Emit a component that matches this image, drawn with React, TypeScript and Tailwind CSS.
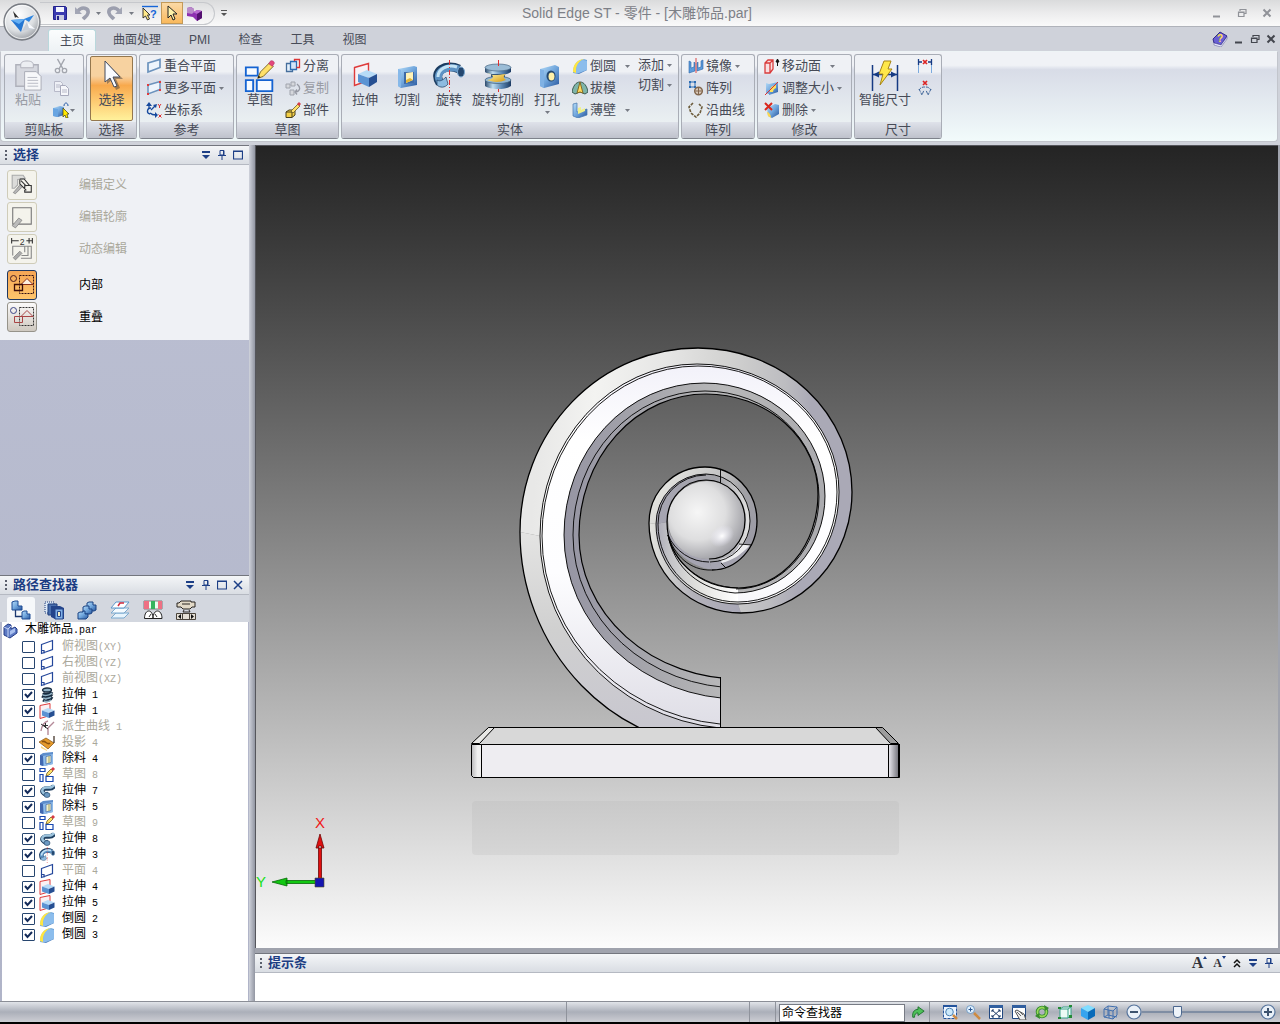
import { useState } from 'react'
import type { ReactNode } from 'react'
import { clsx } from 'clsx'

const FONT = "font-['Liberation_Sans','Noto_Sans_CJK_SC',sans-serif]"

/* ---------- icons ---------- */

interface SvgProps {
  size?: number
  box?: number
  children: ReactNode
}

function Svg({ size = 16, box = 16, children }: SvgProps) {
  return (
    <svg width={size} height={size} viewBox={`0 0 ${box} ${box}`} fill="none" className="shrink-0" aria-hidden="true">
      {children}
    </svg>
  )
}

// shared gradients, referenced by id from every icon
function Defs() {
  return (
    <svg className="absolute h-0 w-0" aria-hidden="true">
      <defs>
        <linearGradient id="blue" x1="0" y1="0" x2="1" y2="1">
          <stop offset="0" stopColor="#b5dcf8" />
          <stop offset="0.5" stopColor="#6fa5dc" />
          <stop offset="1" stopColor="#27559c" />
        </linearGradient>
        <linearGradient id="tube" x1="0" y1="0" x2="1" y2="0">
          <stop offset="0" stopColor="#2c4a6c" />
          <stop offset="0.3" stopColor="#bcdcf0" />
          <stop offset="0.65" stopColor="#5a87b4" />
          <stop offset="1" stopColor="#1c3a63" />
        </linearGradient>
        <linearGradient id="gold" x1="0" y1="0" x2="1" y2="1">
          <stop offset="0" stopColor="#fff9ae" />
          <stop offset="1" stopColor="#d99b12" />
        </linearGradient>
        <radialGradient id="orb" cx="0.4" cy="0.3" r="0.75">
          <stop offset="0" stopColor="#ffffff" />
          <stop offset="0.6" stopColor="#dcdfe2" />
          <stop offset="1" stopColor="#94989e" />
        </radialGradient>
      </defs>
    </svg>
  )
}

const icons = {
  save: (
    <>
      <path d="M1.5 1.5h12l1 1v12h-13z" fill="#3a3ab0" stroke="#22228c" />
      <path d="M4 2h8v5H4z" fill="#f4f6ff" />
      <path d="M4 10h8v5H4z" fill="#c9cbe0" />
      <path d="M5 11h2v4H5z" fill="#22228c" />
    </>
  ),
  undo: (
    <>
      <path d="M4 6c4-5 11-3 10 2-.6 3-3 4-5 6" stroke="#9c9fae" strokeWidth="3.6" />
      <path d="M1 2v7h7z" fill="#a3a6b5" />
    </>
  ),
  redo: (
    <>
      <path d="M12 6C8 1 1 3 2 8c.6 3 3 4 5 6" stroke="#9c9fae" strokeWidth="3.6" />
      <path d="M15 2v7H8z" fill="#a3a6b5" />
    </>
  ),
  help: (
    <>
      <path d="M0 1.5h16" stroke="#1565d8" strokeWidth="1.4" />
      <path d="M1 3v10l2.500-2 2 4 2-1-2-4H8z" fill="#ffe98a" stroke="#222" strokeWidth="0.9" />
      <text x="8" y="13" fill="#1565d8" className="font-['Liberation_Sans',sans-serif] text-[11px] font-bold">
        ?
      </text>
    </>
  ),
  cursor: <path d="M4 1v12l3-3 2 5 2-1-2-5h4z" fill="#fff3a8" stroke="#222" />,
  part: (
    <>
      <path d="M1 3l4-1 3 2v3l3-2 5 1v7l-5 3-4-4-6-1z" fill="#8d2fb0" />
      <path d="M1 3l4-1 3 2v3l-2 2-5-1z" fill="#b98bc9" />
      <path d="M7 7l4-2 5 1-5 3z" fill="#b86ad0" />
      <path d="M11 9l5-3v7l-5 3z" fill="#541070" />
    </>
  ),
  paste: (
    <>
      <path d="M4 5h23v22H4z" fill="#d6d8df" stroke="#afb1bb" strokeWidth="1.5" />
      <path d="M9 5c0-3 3-4 6.500-4S22 2 22 5v3H9z" fill="#eceef2" stroke="#afb1bb" />
      <path d="M13 12h12l5 5v14H13z" fill="#f7f8fa" stroke="#a9abb6" />
      <path d="M16 18h10M16 21h11M16 24h11M16 27h11" stroke="#b9bbc5" />
    </>
  ),
  cut: (
    <>
      <path d="M4.500 1L10 11M11.500 1L6 11" stroke="#a3a6ae" strokeWidth="1.5" />
      <circle cx="4.500" cy="12.500" r="2.200" stroke="#a3a6ae" strokeWidth="1.300" />
      <circle cx="11.500" cy="12.500" r="2.200" stroke="#a3a6ae" strokeWidth="1.300" />
    </>
  ),
  copy: (
    <>
      <path d="M1.500 1.500h6l2 2v8h-8z" fill="#eef0f6" stroke="#b7b9c8" />
      <path d="M7.500 5.500h5l3 3v7h-8z" fill="#f6f7fb" stroke="#a8aabc" />
      <path d="M9 10h5M9 12h5M3 5h4M3 7h4" stroke="#b7b9c8" />
    </>
  ),
  export: (
    <>
      <path d="M0 6l7-2 4 1v8l-6 2-5-1z" fill="url(#blue)" />
      <path d="M0 6l5 1v8l-5-1z" fill="#68a5e2" />
      <path d="M11 4c0-4 4-4 4 0" stroke="#2457a4" />
      <path d="M10 6v9l2-2 1 3h2l-1-4h2z" fill="#ffe800" stroke="#443c10" strokeWidth="0.700" />
    </>
  ),
  arrow: (
    <>
      <path d="M11 3v21l5-4 4 10 4-2-4-9h7z" fill="#4a4038" opacity="0.500" />
      <path d="M9 1v21l5-4 4 9 3-1-4-9h7z" fill="#f9fbff" stroke="#454d5e" />
    </>
  ),
  plane: <path d="M2 5l12-3.500v8L2 14z" fill="#eef5fc" stroke="#6c93bd" strokeWidth="1.700" />,
  planeRed: (
    <>
      <path d="M2 5l12-3.500v8L2 14z" fill="#edf4fc" stroke="#6c93bd" strokeWidth="1.500" />
      <path d="M1 4h2v2H1zM13 1h2v2h-2zM1 13h2v2H1zM13 9h2v2h-2z" fill="#e23b3b" />
    </>
  ),
  axes: (
    <>
      <path d="M3 2v4M4 11c2 2 4 2 6 2M5 8l4-4" stroke="#174a9e" strokeWidth="1.300" />
      <path d="M0 4l3-4 3 4zM9 10l3 3-3 3zM7 3l4-1-1 4z" fill="#174a9e" />
      <path d="M5 6C1 6 0 11 4 12" stroke="#174a9e" strokeWidth="1.300" />
      <path d="M12 2l1.500 2L15 2M13.500 4v2M12.500 12.500l3 3M15.500 12.500l-3 3" stroke="#d33" />
    </>
  ),
  sketch: (
    <>
      <path d="M2 8h13v9H2zM2 22h8v12H2zM14 22h17v12H14z" fill="#f7fbff" stroke="#1463d2" strokeWidth="2" />
      <path d="M15 20l3-7L28 3l4 4-11 11z" fill="#ffe068" stroke="#75601c" />
      <path d="M27 4l2-3c2-1 5 1 4 3l-2 3z" fill="#e2487e" stroke="#a02a56" strokeWidth="0.500" />
      <path d="M15 20l1-3 2 2z" fill="#111" />
    </>
  ),
  sketchSm: (
    <>
      <path d="M1 1.500h5v3H1zM1 7.500h3v7H1zM7 9.500h7v5H7z" fill="#fff" stroke="#1747b0" strokeWidth="1.200" />
      <path d="M7 9l1-3 4-4 2 2-4 4z" fill="#ffe068" stroke="#5d4d18" strokeWidth="0.700" />
      <path d="M12 2l2-2 2 2-2 2z" fill="#d83a45" />
    </>
  ),
  split: (
    <>
      <path d="M1.500 5.500h6v8h-6z" fill="#e5f0fb" stroke="#456e9c" strokeWidth="1.300" />
      <path d="M5.500 3.500h6v8h-6z" fill="#d3e5f8" stroke="#2a6cb4" strokeWidth="1.300" />
      <path d="M9.500 3V1.500h5v8h-3" stroke="#db3535" strokeWidth="1.300" />
    </>
  ),
  duplicate: (
    <>
      <path d="M1 4h4v4H1zM6 2h4v4H6zM5 10h4v5H5z" fill="#d5d7dc" stroke="#a0a4ad" />
      <path d="M12 4c5 4 2 8-2 8M12 9.500l-2 2.500 2 2.500" stroke="#9699a3" strokeWidth="1.300" />
    </>
  ),
  component: (
    <>
      <path d="M1 10l3-2h6v5l-3 2.500H1z" fill="#f3cf45" stroke="#494020" />
      <path d="M1 10h6v5M7 10l3-2" stroke="#494020" />
      <path d="M6 9l7-7 2 2-7 7z" fill="#ffe068" stroke="#6b5b25" strokeWidth="0.800" />
      <path d="M12 2l2-2 2 2-2 2z" fill="#d83a45" />
    </>
  ),
  extrude: (
    <>
      <path d="M5.500 7.500l14-4v17l-14 5z" fill="#f8f1f5" stroke="#de3b3b" strokeWidth="1.400" />
      <path d="M9 14l9-4 10 4-8 4z" fill="#b7dbf7" />
      <path d="M9 14l11 4v9L9 22z" fill="#5b93d3" />
      <path d="M20 18l8-4v8l-8 5z" fill="#264f92" />
    </>
  ),
  extrudeSm: (
    <>
      <path d="M1 2.500l10-2v12l-10 3z" fill="#fbf1f3" stroke="#de3b3b" />
      <path d="M3 7.500L9 5l6.500 2.500L10 10z" fill="#b7dbf7" />
      <path d="M3 7.500L10 10v5l-7-2.500z" fill="#5b93d3" />
      <path d="M10 10l5.500-2.500v5L10 15z" fill="#264f92" />
    </>
  ),
  cutout: (
    <>
      <path d="M7 9l16-3 3 1v18L10 28l-3-2z" fill="url(#blue)" />
      <path d="M7 9l3 1v18l-3-2z" fill="#86b8e9" />
      <path d="M13 12h10v11l-10 1z" fill="#3e6aa6" />
      <path d="M15 13l7-1v8l-7 3z" fill="#fff3b8" />
      <path d="M15 20l4-2 3 2-7 3z" fill="#e1b43a" />
    </>
  ),
  cutoutSm: (
    <>
      <path d="M1 4l3-2 10-1v12l-9 2-4-1z" fill="#5d8dcb" />
      <path d="M1 4l3 1v10l-3-1z" fill="#4168b0" />
      <path d="M4 5l10-2v10L5 15z" fill="#8fbcea" />
      <path d="M7 5.500l5-1v7l-5 1.500z" fill="#f1f0cc" stroke="#2e569b" strokeWidth="0.600" />
      <path d="M10 5v7" stroke="#a5a15d" />
    </>
  ),
  revolve: (
    <>
      <path d="M7 23C-1 11 13 3 26 9" stroke="#1c3c60" strokeWidth="9" />
      <path d="M7 22C1 12 13 5 26 9" stroke="#5d92c4" strokeWidth="7" />
      <path d="M5 17C5 9 14 4 24 7" stroke="#c4e3f5" strokeWidth="3" />
      <ellipse cx="28" cy="12" rx="3.500" ry="5" fill="#24476f" stroke="#7aa8d0" />
      <path d="M4 20c3 2 6 0 9-3l2 7c-3 4-8 4-11 1z" fill="#8dbbe0" stroke="#1c3c60" strokeWidth="0.700" />
      <path d="M16.500 0v32" stroke="#df3131" strokeDasharray="5 2 1 2" />
    </>
  ),
  revcut: (
    <>
      <path d="M3 7v5c5 4 21 4 26 0V7z" fill="url(#tube)" />
      <ellipse cx="16" cy="7.500" rx="13" ry="3.500" fill="#9bbcd6" stroke="#4a6984" strokeWidth="0.700" />
      <path d="M9 14h14v7H9z" fill="#3a5878" />
      <path d="M3 20v6c5 4 21 4 26 0v-6z" fill="url(#tube)" />
      <ellipse cx="16" cy="20" rx="13" ry="3.500" fill="#8fb5d4" stroke="#3e5c78" strokeWidth="0.700" />
      <path d="M5 13c5 3 10 2 19 1-3 2-3 4 0 6-7 3-14 2-19 0 8-1 8-5 0-7z" fill="url(#gold)" />
      <path d="M16.500 0v6M16.500 29v3" stroke="#df3131" />
    </>
  ),
  hole: (
    <>
      <path d="M9 9l15-4 4 2v17L13 28l-4-2z" fill="url(#blue)" />
      <path d="M9 9l4 1v18l-4-2z" fill="#7fb1e4" />
      <ellipse cx="20" cy="16" rx="4.500" ry="5.500" fill="#24486f" />
      <ellipse cx="20.500" cy="16.500" rx="3" ry="4" fill="#fff0a8" />
    </>
  ),
  round: (
    <>
      <path d="M1 15C1 6 5 2 12 1l3 1v10l-8 4z" fill="url(#blue)" />
      <path d="M1 14C1 6 5 2 12 1l-2 1C6 4 4 8 4 15z" fill="#ffe640" />
      <path d="M4 15C4 8 6 4 11 2l4 1v9l-8 3z" fill="#8cbdec" />
    </>
  ),
  draft: (
    <>
      <path d="M0 12c1-6 4-10 8-10s7 4 8 10l-3 2-5-2-5 2z" fill="#7eb5a9" stroke="#3c5950" />
      <path d="M8 2L5 13l3-1 3 1z" fill="#ffd95b" stroke="#846b24" />
    </>
  ),
  shell: (
    <>
      <path d="M1 2l4-1v9l10-3v6l-9 3-5-2z" fill="url(#blue)" stroke="#4576ac" strokeWidth="0.700" />
      <path d="M6 10V6l3-1v3l4-2v3l-7 3z" fill="#eff18a" />
    </>
  ),
  mirror: (
    <>
      <path d="M1 3l2 1v6l3-1V4l1 1v8l-6 2zM15 2l-2 1v6l-3 1V4L9 5v8l6-2z" fill="#5b9bdc" stroke="#2e67a8" strokeWidth="0.600" />
      <path d="M8 0v15" stroke="#d44" />
    </>
  ),
  pattern: (
    <>
      <path d="M2 2h5v5H2z" stroke="#2a6cb4" />
      <path d="M1 1h2v2H1zM6 1h2v2H6zM1 6h2v2H1zM6 6h2v2H6z" fill="#2a6cb4" />
      <circle cx="10.500" cy="11" r="3.800" fill="#d9cabb" stroke="#82674e" strokeWidth="1.500" />
      <path d="M10.500 8v6M7.500 11h6" stroke="#82674e" />
    </>
  ),
  along: <path d="M5 1L1 5l2 6 5 4 4-4 2-6-3-3" stroke="#6d5d3d" strokeWidth="1.600" strokeDasharray="3 1" />,
  moveFace: (
    <>
      <path d="M1 5l3-3h5v9l-3 4H1zM1 5h5v10M6 5l3-3" fill="#f8dfe1" stroke="#d93c3c" strokeWidth="1.300" />
      <path d="M13.500 2v6M12 4l1.500-3L15 4z" stroke="#111" fill="#111" />
    </>
  ),
  resize: (
    <>
      <path d="M2 3l3 1v10l-3-1zM5 4l9-2v10l-9 3z" fill="url(#blue)" />
      <path d="M6 12c0-4 1-6 6-7v3c-2 1-3 2-3 4z" fill="#ffe05a" />
      <path d="M1 15L14 2" stroke="#dc3030" />
    </>
  ),
  remove: (
    <>
      <path d="M3 6l8-4 4 1v9l-7 4-4-2z" fill="url(#blue)" />
      <path d="M3 10c2 0 4 3 4 6l-3-2z" fill="#ffd84b" />
      <path d="M1 1l7 7M8 1L1 8" stroke="#d9281e" strokeWidth="2" />
    </>
  ),
  smartDim: (
    <>
      <path d="M3.500 5v26M28.500 5v26M4 14.500h24" stroke="#153a83" strokeWidth="1.500" />
      <path d="M4 14.500l6-3v6zM28 14.500l-6-3v6z" fill="#153a83" />
      <path d="M15 1h7l-3 8h4L11 25l3-11h-4z" fill="#ffe84a" stroke="#a78517" />
    </>
  ),
  dimLine: (
    <>
      <path d="M1.500 1v14M14.500 1v14" stroke="#7baade" />
      <path d="M1.500 1v6M14.500 1v6M2 4h3M11 4h3" stroke="#153a83" strokeWidth="1.300" />
      <path d="M6 2l4 4M10 2L6 6" stroke="#dd2525" strokeWidth="1.700" />
    </>
  ),
  dimAngle: (
    <>
      <path d="M2 9l3 6 2-5M14 9l-3 6-2-5M2 10c2-3 4-3 6-3s4 0 6 3" stroke="#3e6498" strokeDasharray="3 1" />
      <path d="M6 1l4 4M10 1L6 5" stroke="#dd2525" strokeWidth="1.700" />
    </>
  ),
  book: (
    <>
      <path d="M1 8l7-7 7 4-6 9-7-2z" fill="#6a60d4" stroke="#332b88" />
      <path d="M2 12l7 2 6-8v2l-6 8-7-2z" fill="#eef0ff" stroke="#55509a" strokeWidth="0.500" />
      <text x="5" y="11" fill="#ffe04a" className="font-['Liberation_Sans',sans-serif] text-[10px] font-bold">
        ?
      </text>
    </>
  ),
  editDef: (
    <>
      <path d="M2 2h10l2 3-7 1v5l-3 3H2z" fill="#dcdcda" stroke="#a9aaab" />
      <path d="M9 5.500h4l5 6M9 6v4l6 6M13.500 11.500h6v6h-6zM10 7l5 5" stroke="#333" />
      <path d="M3 18l6-7 2 2-6 6z" fill="#b5b5b5" stroke="#777" strokeWidth="0.600" />
    </>
  ),
  editProfile: (
    <>
      <path d="M2.500 2.500h17v15h-17z" stroke="#777" />
      <path d="M2 19l6-7 3 2-6 7z" fill="#bbb" stroke="#777" strokeWidth="0.600" />
    </>
  ),
  dynEdit: (
    <>
      <path d="M1.500 1v5M20.500 1v5M2 3.500h6M15 3.500h6M17.500 1v5" stroke="#333" />
      <text x="9" y="7" fill="#333" className="font-['Liberation_Sans',sans-serif] text-[8px]">
        2
      </text>
      <path d="M2.500 17V8.500h17v11H10M16.500 9v8h-6M13.500 9v5" stroke="#888" />
      <path d="M3 19l6-6 2 2-6 6z" fill="#aaa" stroke="#777" strokeWidth="0.600" />
    </>
  ),
  inside: (
    <>
      <circle cx="3.500" cy="5.500" r="3" stroke="#4a1d20" />
      <path d="M9.500 2.500h14v18h-14z" stroke="#321014" strokeDasharray="2 1" />
      <path d="M11 11.500h12l-6-6z" fill="#fff1df" stroke="#8c2d17" />
      <path d="M4.500 11.500h8v6h-8z" stroke="#3c0d08" strokeWidth="1.300" />
    </>
  ),
  overlap: (
    <>
      <circle cx="3.500" cy="5.500" r="3" stroke="#3c4586" />
      <path d="M9.500 2.500h14v18h-14z" stroke="#333" strokeDasharray="2 1" />
      <path d="M11 11.500h12l-6-6z" stroke="#a94545" />
      <path d="M4.500 11.500h8v6h-8z" stroke="#a94545" />
    </>
  ),
  tabTree: (
    <>
      <path d="M1 2l3-1h3v5h4v4H1z" fill="url(#blue)" stroke="#1c4b94" />
      <path d="M4.500 10v6.500H12" stroke="#1d3970" strokeWidth="1.300" />
      <path d="M11 12l2-1h3v3h3v5h-8z" fill="url(#blue)" stroke="#1c4b94" />
    </>
  ),
  tabFamily: (
    <>
      <path d="M1 2h9v11H1z" fill="#dce9f7" stroke="#203e7c" strokeDasharray="1 1" />
      <path d="M4 4h9v11H4z" fill="#486fae" stroke="#203e7c" />
      <path d="M7 6h9l4 2v11h-9l-4-2z" fill="#24458b" />
      <path d="M11 9h8v10h-8z" fill="#7fb0e6" stroke="#24458b" />
      <path d="M13.500 11.500h3v5h-3z" fill="#f4f0c8" stroke="#24458b" />
    </>
  ),
  tabParts: (
    <>
      <path d="M10 3l2-1h4v3h3v5l-2 1h-7z" fill="url(#blue)" stroke="#1a4383" />
      <path d="M6 7l2-1h4v3h3v4l-2 1H6z" fill="url(#blue)" stroke="#1a4383" />
      <path d="M1 13l2-1h3v-1h2v3h3v3l-2 2H1z" fill="url(#blue)" stroke="#1a4383" />
    </>
  ),
  tabLayers: (
    <>
      <path d="M1 18l5-5h13l-5 5z" fill="#e8f4fc" stroke="#7ba9cf" />
      <path d="M1 13l5-5h13l-5 5z" fill="#f5fbff" stroke="#7ba9cf" />
      <path d="M1 8l5-6h13l-5 6z" fill="#fff" stroke="#5d97ca" />
      <path d="M8 6l2-3h4" stroke="#d42d3c" strokeWidth="1.500" />
    </>
  ),
  tabSensor: (
    <>
      <path d="M1 1h18v8H1z" fill="#e9fff0" stroke="#555" strokeWidth="0.700" />
      <path d="M1 1h5v8H1zM15 1h4v8h-4z" fill="#ee7184" />
      <path d="M8 1h4v8H8z" fill="#36b35e" />
      <path d="M1.500 18.500c0-10 8.500-10 8.500 0 0-10 9-10 9 0z" fill="#fff" stroke="#222" />
      <path d="M6 17l2-3M14 17l-2-3" stroke="#333" />
    </>
  ),
  tabCamera: (
    <>
      <path d="M1 3h2l2-2h10v1h4v5h-3l-2 2H7L5 7H1z" fill="#e2d9c7" stroke="#292521" />
      <path d="M6 4h8M8 10l-1 2h7l-1-2" stroke="#292521" />
      <path d="M.500 13.500h19v6H.500zM6.500 14v5M13.500 14v5" fill="#e4dfd5" stroke="#4a443b" />
      <path d="M5 14v5l-3-2.500zM15 14v5l3-2.500z" fill="#111" />
    </>
  ),
  partDoc: (
    <>
      <path d="M2 4l4-3 3 1v4l4-2 2 2v4l-7 5-6-3z" fill="#5c79c3" stroke="#243d88" />
      <path d="M2 4l4 2v8M6 6l3-3" stroke="#c4d4f6" />
      <path d="M8 8l5-3v4l-5 3z" fill="#a9c0ef" />
    </>
  ),
  refPlane: <path d="M2.500 5.500l11-4v9l-11 4zM2.500 11.500h2.500v3" stroke="#24479b" strokeWidth="1.200" />,
  coil: (
    <>
      <ellipse cx="8" cy="3" rx="4.500" ry="2" fill="#8fb0c4" stroke="#182c40" strokeWidth="1.300" />
      <path d="M4 6c2 2 8 1 9-1M3 9c3 2 9 1 10-2M4 13c3 2 8 0 9-3" stroke="#182c40" strokeWidth="2.800" />
      <path d="M4 8c3 1 7 0 9-2M4 11c3 1 7 0 8-1M5 14c3 1 6 0 7-1" stroke="#8fb0c4" strokeWidth="1.500" />
    </>
  ),
  derived: (
    <>
      <path d="M2 12c1-6 3-9 7-10M9 16v-7l6-6" stroke="#b58a99" strokeWidth="1.400" />
      <path d="M2 5l7 5M6.500 4v5M4 6.500h5" stroke="#333" />
    </>
  ),
  projection: (
    <>
      <path d="M0 7l7-4 8 5-6 6z" fill="#e59a2b" stroke="#84500f" strokeWidth="0.700" />
      <path d="M3 7c3-3 5 4 8 1" stroke="#8a5210" strokeWidth="1.500" />
      <path d="M15 1v7" stroke="#44352a" strokeWidth="1.300" />
      <path d="M2 11l6 4v1l-6-3z" fill="#ffd67a" />
    </>
  ),
  sweep: (
    <>
      <path d="M15 3c-3 5-7 1-10 3s-1 6 4 5" stroke="#1f3f60" strokeWidth="4.500" />
      <path d="M15 2c-3 5-7 1-10 3S3 11 8 11" stroke="#9cc3dd" strokeWidth="2.500" />
      <ellipse cx="8" cy="12" rx="3" ry="2.500" fill="#6b99c2" stroke="#1f3f60" strokeWidth="0.600" />
    </>
  ),
  redoGreen: <path d="M2 14c-1-7 3-9 6-9V2l7 5-7 5V9c-3 0-4 2-4 5z" fill="#4fc05a" stroke="#1a6f2a" />,
  zoomArea: (
    <>
      <path d="M1.500 1.500h13v13h-13z" fill="#edf5ff" stroke="#24549c" strokeDasharray="3 1" />
      <path d="M1 1h14v2H1z" fill="#24549c" />
      <circle cx="7.500" cy="8" r="3.800" fill="#cce9fb" stroke="#4b82b5" />
      <path d="M11 11l4 4" stroke="#ce8b42" strokeWidth="2.500" />
    </>
  ),
  zoomIn: (
    <>
      <circle cx="5.500" cy="5.500" r="4" fill="#dff1ff" stroke="#7299c1" />
      <path d="M3.500 5.500h4M5.500 3.500v4" stroke="#2b5591" />
      <path d="M9 9l6 6" stroke="#ce8b42" strokeWidth="2.500" />
    </>
  ),
  fit: (
    <>
      <path d="M1.500 2.500h13v12h-13z" fill="#fff" stroke="#204780" />
      <path d="M1 1h14v3H1z" fill="#315f9f" />
      <path d="M4 6l8 7M12 6l-8 7M4 8V6h2M10 6h2v2M4 11v2h2M10 13h2v-2" stroke="#203c68" />
    </>
  ),
  pan: (
    <>
      <path d="M1.500 2.500h13v12h-13z" fill="#fff" stroke="#204780" />
      <path d="M1 1h14v3H1z" fill="#315f9f" />
      <path d="M4 7l2-1 7 4 2 6H9z" fill="#eee" stroke="#555" />
      <path d="M6 8l4 4M8 7l4 4" stroke="#666" />
    </>
  ),
  rotate: (
    <>
      <circle cx="8" cy="8" r="4.500" stroke="#2f8b2d" strokeWidth="3.500" />
      <circle cx="8" cy="8" r="4.500" stroke="#99d858" strokeWidth="1.800" />
      <path d="M10 1l5 3-4 3zM6 15l-5-3 4-3z" fill="#378b2d" />
    </>
  ),
  viewCube: (
    <>
      <path d="M3 5l3-2h8v8l-3 3H3zM3 5h8v9M11 5l3-2" fill="#ecfbf5" stroke="#39a08a" />
      <path d="M1 3h3v2H1zM12 1h3v2h-3zM1 13h3v2H1zM12 11h3v3h-3z" fill="#248b36" />
    </>
  ),
  shaded: (
    <>
      <path d="M1 4l7-3 7 3-7 4z" fill="#81ddff" />
      <path d="M1 4l7 4v8l-7-4z" fill="#36a4ef" />
      <path d="M15 4L8 8v8l7-4z" fill="#096ab9" />
    </>
  ),
  wire: <path d="M1 5l4-3 9 1v8l-4 4-9-2zM1 5l9 2v8M10 7l4-4M5 2v9l9 2M5 11l-4 2M6 6v8" stroke="#416fae" />,
}

type IconName = keyof typeof icons

// drawing grids of the icons that are not 16 units wide
const BOX: Partial<Record<IconName, number>> = {
  paste: 33,
  arrow: 32,
  sketch: 35,
  extrude: 32,
  cutout: 32,
  revolve: 32,
  revcut: 32,
  hole: 32,
  smartDim: 32,
  editDef: 22,
  editProfile: 22,
  dynEdit: 22,
  inside: 24,
  overlap: 24,
  tabTree: 20,
  tabFamily: 20,
  tabParts: 20,
  tabLayers: 20,
  tabSensor: 20,
  tabCamera: 20,
}

function Icon({ name, size = 16 }: { name: IconName; size?: number }) {
  return (
    <Svg size={size} box={BOX[name] ?? 16}>
      {icons[name]}
    </Svg>
  )
}

function Caret() {
  return (
    <svg width="5" height="3" viewBox="0 0 5 3" className="shrink-0" aria-hidden="true">
      <path d="M0 0h5L2.500 3z" fill="#777b84" />
    </svg>
  )
}

function WindowGlyph({ kind }: { kind: 'min' | 'restore' | 'close' }) {
  return (
    <svg width="10" height="10" viewBox="0 0 10 10" fill="none" stroke="currentColor" aria-hidden="true">
      {kind === 'min' && <path d="M1 8.500h7" strokeWidth="2" />}
      {kind === 'restore' && <path d="M3 3V1.500h6v4H7M1.500 4h5.500v4.500H1.500zM3 1.500h6M1 4.500h6" strokeWidth="1.200" />}
      {kind === 'close' && <path d="M1.500 1.500l7 7M8.500 1.500l-7 7" strokeWidth="2" />}
    </svg>
  )
}

function PaneGlyph({ kind }: { kind: 'menu' | 'pin' | 'max' | 'close' }) {
  return (
    <Svg size={10} box={10}>
      {kind === 'menu' && <path d="M1 1h8v2H1zM1 5h8L5 9z" fill="#1d3f86" />}
      {kind === 'pin' && <path d="M3 .500h4V5H3zM1 5.500h8M5 6v4M6.500 0v5" stroke="#1d3f86" />}
      {kind === 'max' && <path d="M.500 1h9v8h-9zM.500 1.500h9" stroke="#1d3f86" strokeWidth="1.200" />}
      {kind === 'close' && <path d="M1 1l8 8M9 1L1 9" stroke="#1d3f86" strokeWidth="1.500" />}
    </Svg>
  )
}

/* ---------- ribbon ---------- */

interface CommandProps {
  icon?: IconName
  label: string
  caret?: boolean
  wide?: boolean
  disabled?: boolean
}

function SmallCommand({ icon, label, caret, wide, disabled }: CommandProps) {
  return (
    <button
      type="button"
      disabled={disabled}
      className={clsx('flex items-center whitespace-nowrap text-[13px]', icon ? 'h-[22px]' : 'h-[20px]', disabled ? 'text-[#999ca4]' : 'text-[#474b57]')}
    >
      {icon && <Icon name={icon} />}
      <span className="ml-[2px]">{label}</span>
      {caret && (
        <span className={wide ? 'ml-[9px]' : 'ml-[3px]'}>
          <Caret />
        </span>
      )}
    </button>
  )
}

function BigCommand({ icon, label, caret, disabled, wide }: CommandProps) {
  return (
    <button
      type="button"
      disabled={disabled}
      className={clsx(
        'flex shrink-0 flex-col items-center whitespace-nowrap pt-[5px] text-[13px] leading-4',
        wide ? 'w-[56px]' : 'w-[42px]',
        disabled ? 'text-[#999ca4]' : 'text-[#474b57]',
      )}
    >
      {icon && <Icon name={icon} size={32} />}
      {label}
      {caret && (
        <span className="flex h-2 items-center">
          <Caret />
        </span>
      )}
    </button>
  )
}

function Group({ title, width, children }: { title: string; width: string; children: ReactNode }) {
  return (
    <section
      className={clsx(
        'flex h-[85px] shrink-0 flex-col overflow-hidden rounded-[3px] border border-[#a9adb6] border-b-[#7e828b] bg-linear-to-b from-[#eff1f5] from-20% via-[#d9dde8] via-25% to-[#f0f6f5]',
        width,
      )}
    >
      <div className="flex flex-1">{children}</div>
      <h2 className="bg-linear-to-b from-[#dfe2ea] to-[#bfc2cc] text-center text-[13px] leading-4 text-[#474b57]">{title}</h2>
    </section>
  )
}

function Ribbon() {
  return (
    <div className="mr-[2px] flex gap-[2px] rounded-b-sm border border-[#c2c5cc] border-t-[#eef4f6] bg-linear-to-b from-[#f0f2f6] from-15% via-[#d8dce7] via-20% to-[#f2fbfb] px-[3px] pt-[2px] pb-[2px]">
      <Group title="剪贴板" width="w-[80px]">
        <div className="pl-[2px]">
          <BigCommand icon="paste" label="粘贴" disabled />
        </div>
        <div className="flex flex-col pl-1">
          <button type="button" aria-label="剪切" className="flex h-[22px] items-center">
            <Icon name="cut" />
          </button>
          <button type="button" aria-label="复制到剪贴板" className="flex h-[22px] items-center">
            <Icon name="copy" />
          </button>
          <button type="button" aria-label="导出" className="flex h-[22px] items-center gap-px">
            <Icon name="export" />
            <Caret />
          </button>
        </div>
      </Group>
      <Group title="选择" width="w-[51px]">
        <button
          type="button"
          className="mx-auto my-px flex w-[43px] flex-col items-center rounded-[2px] border border-[#94774e] bg-linear-to-b from-[#f7d2a0] from-30% via-[#f8a94c] via-45% to-[#fff19b] pt-[3px] text-[13px] leading-4 text-[#474b57]"
        >
          <Icon name="arrow" size={32} />
          选择
        </button>
      </Group>
      <Group title="参考" width="w-[95px]">
        <div className="flex flex-col pl-[6px]">
          <SmallCommand icon="plane" label="重合平面" />
          <SmallCommand icon="planeRed" label="更多平面" caret />
          <SmallCommand icon="axes" label="坐标系" />
        </div>
      </Group>
      <Group title="草图" width="w-[103px]">
        <div className="pl-[2px]">
          <BigCommand icon="sketch" label="草图" />
        </div>
        <div className="flex flex-col pl-1">
          <SmallCommand icon="split" label="分离" />
          <SmallCommand icon="duplicate" label="复制" disabled />
          <SmallCommand icon="component" label="部件" />
        </div>
      </Group>
      <Group title="实体" width="w-[338px]">
        <div className="flex pl-[2px]">
          <BigCommand icon="extrude" label="拉伸" />
          <BigCommand icon="cutout" label="切割" />
          <BigCommand icon="revolve" label="旋转" />
          <BigCommand icon="revcut" label="旋转切削" wide />
          <BigCommand icon="hole" label="打孔" caret />
        </div>
        <div className="flex flex-col pl-1">
          <SmallCommand icon="round" label="倒圆" caret wide />
          <SmallCommand icon="draft" label="拔模" />
          <SmallCommand icon="shell" label="薄壁" caret wide />
        </div>
        <div className="flex flex-col pl-[6px]">
          <SmallCommand label="添加" caret />
          <SmallCommand label="切割" caret />
        </div>
      </Group>
      <Group title="阵列" width="w-[74px]">
        <div className="flex flex-col pl-[6px]">
          <SmallCommand icon="mirror" label="镜像" caret />
          <SmallCommand icon="pattern" label="阵列" />
          <SmallCommand icon="along" label="沿曲线" />
        </div>
      </Group>
      <Group title="修改" width="w-[95px]">
        <div className="flex flex-col pl-[6px]">
          <SmallCommand icon="moveFace" label="移动面" caret wide />
          <SmallCommand icon="resize" label="调整大小" caret />
          <SmallCommand icon="remove" label="删除" caret />
        </div>
      </Group>
      <Group title="尺寸" width="w-[88px]">
        <div className="pl-[2px]">
          <BigCommand icon="smartDim" label="智能尺寸" wide />
        </div>
        <div className="flex flex-col pl-1">
          <button type="button" aria-label="间距" className="flex h-[22px] items-center">
            <Icon name="dimLine" />
          </button>
          <button type="button" aria-label="夹角" className="flex h-[22px] items-center">
            <Icon name="dimAngle" />
          </button>
        </div>
      </Group>
    </div>
  )
}

const TABS = ['主页', '曲面处理', 'PMI', '检查', '工具', '视图']

function Header() {
  const [tab, setTab] = useState('主页')
  return (
    <header className="relative bg-[#cfd2da] pb-[3px]">
      <div className="grid h-[27px] grid-cols-[1fr_auto_1fr] items-center border-b border-[#b0b3ba] bg-linear-to-b from-[#dadbdc] via-[#ececed] to-[#fafafa]">
        <div className="flex items-center pl-10">
          <div className="flex h-[23px] items-center rounded-r-full border border-l-0 border-[#c6c8cc] pr-3 pl-3">
            <button type="button" aria-label="保存">
              <Icon name="save" />
            </button>
            <button type="button" aria-label="撤销" className="ml-[6px] flex items-center gap-[6px]">
              <Icon name="undo" />
              <Caret />
            </button>
            <button type="button" aria-label="重做" className="ml-[6px] flex items-center gap-[6px]">
              <Icon name="redo" />
              <Caret />
            </button>
            <button type="button" aria-label="帮助" className="mr-[3px] ml-2">
              <Icon name="help" />
            </button>
            <button
              type="button"
              aria-label="选择工具"
              className="border border-[#c39a59] bg-linear-to-b from-[#fbd9a5] to-[#f9b95c] px-[2px] py-[2px]"
            >
              <Icon name="cursor" />
            </button>
            <button type="button" aria-label="零件" className="ml-[3px]">
              <Icon name="part" />
            </button>
          </div>
          <button type="button" aria-label="自定义" className="ml-[6px]">
            <Svg size={6} box={6}>
              <path d="M0 0h6v1H0zM0 3h6L3 6z" fill="#555" />
            </Svg>
          </button>
        </div>
        <h1 className="pr-[6px] text-[14px] whitespace-nowrap text-[#7d8087]">Solid Edge ST - 零件 - [木雕饰品.par]</h1>
        <div className="flex justify-end gap-[15px] pr-2 text-[#909298]">
          <button type="button" aria-label="最小化">
            <WindowGlyph kind="min" />
          </button>
          <button type="button" aria-label="还原">
            <WindowGlyph kind="restore" />
          </button>
          <button type="button" aria-label="关闭">
            <WindowGlyph kind="close" />
          </button>
        </div>
      </div>

      <div className="flex h-6 items-end pl-12">
        <nav className="flex items-end">
          {TABS.map((name, i) => (
            <button
              key={name}
              type="button"
              onClick={() => setTab(name)}
              className={clsx(
                'h-[22px] text-[12px] leading-5 text-[#474b57]',
                i === 0 ? 'mr-[3px] px-[11px]' : 'px-[14px]',
                tab === name && 'rounded-t-[3px] border border-b-0 border-[#b9d8dc] bg-linear-to-b from-[#fbfdfd] to-[#eef2f5]',
              )}
            >
              {name}
            </button>
          ))}
        </nav>
        <div className="ml-auto flex h-6 items-center gap-[6px] pr-1 text-[#43464e]">
          <button type="button" aria-label="帮助主题">
            <Icon name="book" />
          </button>
          <button type="button" aria-label="最小化文档">
            <WindowGlyph kind="min" />
          </button>
          <button type="button" aria-label="还原文档">
            <WindowGlyph kind="restore" />
          </button>
          <button type="button" aria-label="关闭文档">
            <WindowGlyph kind="close" />
          </button>
        </div>
      </div>

      <Ribbon />

      <button type="button" aria-label="应用程序菜单" className="absolute top-[3px] left-[3px]">
        <Svg size={38} box={38}>
          <circle cx="19" cy="19" r="18" fill="url(#orb)" stroke="#777b82" strokeWidth="1.300" />
          <circle cx="19" cy="19" r="16.500" stroke="#fff" strokeOpacity="0.700" />
          <path d="M8 17l14-1-4 13z" fill="#2476d2" />
          <path d="M8 17l14-1-6 5z" fill="#65aff3" />
          <path d="M21 16l10-4-5 7z" fill="#2f86e0" />
          <path d="M19 28l5-9 8 7-8 1z" fill="#c6cdd8" />
          <path d="M24 19l8 7-6-1z" fill="#f8fafd" />
          <path d="M10 8l6 7-3-1-1 1z" fill="#333" />
        </Svg>
      </button>
    </header>
  )
}

/* ---------- left side ---------- */

function PaneHeader({ title, children }: { title: string; children: ReactNode }) {
  return (
    <div className="flex h-5 shrink-0 items-center border-t border-b border-t-[#73767e] border-b-[#b5b9c2] bg-linear-to-b from-[#f4f6f8] to-[#d9dde3] pr-[6px] pl-[5px] text-[#1c3d83]">
      <span className="mr-[6px] flex flex-col gap-[2px]">
        <i className="h-[2px] w-[2px] bg-[#5a5f6c]" />
        <i className="h-[2px] w-[2px] bg-[#5a5f6c]" />
        <i className="h-[2px] w-[2px] bg-[#5a5f6c]" />
      </span>
      <h2 className="text-[13px] leading-4 font-bold">{title}</h2>
      <div className="ml-auto flex items-center gap-[6px]">{children}</div>
    </div>
  )
}

function PaneButton({ kind, label }: { kind: 'menu' | 'pin' | 'max' | 'close'; label: string }) {
  return (
    <button type="button" aria-label={label}>
      <PaneGlyph kind={kind} />
    </button>
  )
}

const SELECT_TOOLS: { icon: IconName; label: string; state: 'off' | 'on' | 'idle' }[] = [
  { icon: 'editDef', label: '编辑定义', state: 'off' },
  { icon: 'editProfile', label: '编辑轮廓', state: 'off' },
  { icon: 'dynEdit', label: '动态编辑', state: 'off' },
  { icon: 'inside', label: '内部', state: 'on' },
  { icon: 'overlap', label: '重叠', state: 'idle' },
]

function SelectPane() {
  return (
    <section>
      <PaneHeader title="选择">
        <PaneButton kind="menu" label="菜单" />
        <PaneButton kind="pin" label="固定" />
        <PaneButton kind="max" label="最大化" />
      </PaneHeader>
      <div className="flex flex-col gap-[2px] bg-[#eff1f5] pt-[5px] pb-2 pl-[7px] text-[12px]">
        {SELECT_TOOLS.map((t, i) => (
          <button
            key={t.label}
            type="button"
            disabled={t.state === 'off'}
            className={clsx('flex items-center gap-[42px]', i === 3 && 'mt-1', t.state === 'off' ? 'text-[#aaa89b]' : 'text-black')}
          >
            <span
              className={clsx(
                'grid h-[30px] w-[30px] place-items-center rounded-[3px] border',
                t.state === 'off' && 'border-[#cfccb9] bg-[#f4f3ec]',
                t.state === 'on' && 'border-[#20375f] bg-linear-to-b from-[#f5a555] to-[#ffc66c]',
                t.state === 'idle' && 'border-[#96938a] bg-linear-to-b from-[#fbfafa] to-[#cfc9c0]',
              )}
            >
              <Icon name={t.icon} size={24} />
            </span>
            {t.label}
          </button>
        ))}
      </div>
    </section>
  )
}

const FEATURES: { icon: IconName; name: string; suffix: string; shown: boolean }[] = [
  { icon: 'refPlane', name: '俯视图', suffix: '(XY)', shown: false },
  { icon: 'refPlane', name: '右视图', suffix: '(YZ)', shown: false },
  { icon: 'refPlane', name: '前视图', suffix: '(XZ)', shown: false },
  { icon: 'coil', name: '拉伸', suffix: ' 1', shown: true },
  { icon: 'extrudeSm', name: '拉伸', suffix: ' 1', shown: true },
  { icon: 'derived', name: '派生曲线', suffix: ' 1', shown: false },
  { icon: 'projection', name: '投影', suffix: ' 4', shown: false },
  { icon: 'cutoutSm', name: '除料', suffix: ' 4', shown: true },
  { icon: 'sketchSm', name: '草图', suffix: ' 8', shown: false },
  { icon: 'sweep', name: '拉伸', suffix: ' 7', shown: true },
  { icon: 'cutoutSm', name: '除料', suffix: ' 5', shown: true },
  { icon: 'sketchSm', name: '草图', suffix: ' 9', shown: false },
  { icon: 'sweep', name: '拉伸', suffix: ' 8', shown: true },
  { icon: 'revolve', name: '拉伸', suffix: ' 3', shown: true },
  { icon: 'refPlane', name: '平面', suffix: ' 4', shown: false },
  { icon: 'extrudeSm', name: '拉伸', suffix: ' 4', shown: true },
  { icon: 'extrudeSm', name: '拉伸', suffix: ' 5', shown: true },
  { icon: 'round', name: '倒圆', suffix: ' 2', shown: true },
  { icon: 'round', name: '倒圆', suffix: ' 3', shown: true },
]

const FINDER_TABS: { icon: IconName; label: string }[] = [
  { icon: 'tabTree', label: '特征树' },
  { icon: 'tabFamily', label: '零件族' },
  { icon: 'tabParts', label: '零件库' },
  { icon: 'tabLayers', label: '图层' },
  { icon: 'tabSensor', label: '传感器' },
  { icon: 'tabCamera', label: '回放' },
]

function PathFinder() {
  const [shown, setShown] = useState(FEATURES.map((f) => f.shown))
  const toggle = (i: number) => setShown((s) => s.map((v, n) => (n === i ? !v : v)))

  return (
    <section className="flex h-[426px] flex-col">
      <PaneHeader title="路径查找器">
        <PaneButton kind="menu" label="菜单" />
        <PaneButton kind="pin" label="固定" />
        <PaneButton kind="max" label="最大化" />
        <PaneButton kind="close" label="关闭" />
      </PaneHeader>
      <div className="flex h-[27px] shrink-0 items-end gap-[5px] bg-[#d3d7df] pl-[7px]">
        {FINDER_TABS.map((t, i) => (
          <button
            key={t.label}
            type="button"
            aria-label={t.label}
            className={clsx('grid h-[25px] w-7 place-items-center rounded-t-[3px]', i === 0 && 'bg-[#f6f8fa]')}
          >
            <Icon name={t.icon} size={20} />
          </button>
        ))}
      </div>
      <div className="mr-px ml-[2px] flex-1 overflow-hidden bg-white text-[12px] leading-4 font-['Liberation_Mono','Noto_Sans_CJK_SC',monospace]">
        <div className="flex h-[17px] items-center gap-[7px] text-black">
          <Icon name="partDoc" />
          <span>
            木雕饰品<span className="text-[10px]">.par</span>
          </span>
        </div>
        <ul>
          {FEATURES.map((f, i) => (
            <li key={i}>
              <label className={clsx('flex h-4 items-center pl-5', shown[i] ? 'text-black' : 'text-[#aaa89b]')}>
                <span className="grid">
                  <input
                    type="checkbox"
                    checked={shown[i]}
                    onChange={() => toggle(i)}
                    className="col-start-1 row-start-1 h-3 w-[13px] appearance-none rounded-[1px] border border-[#27466f] bg-white"
                  />
                  {shown[i] && (
                    <svg viewBox="0 0 13 12" className="pointer-events-none col-start-1 row-start-1 h-3 w-[13px]" fill="none">
                      <path d="M3 5l2.500 3L10 3" stroke="#152c5a" strokeWidth="2" />
                    </svg>
                  )}
                </span>
                <span className="mr-[7px] ml-1">
                  <Icon name={f.icon} />
                </span>
                <span className="whitespace-pre">
                  {f.name}
                  <span className="text-[10px]">{f.suffix}</span>
                </span>
              </label>
            </li>
          ))}
        </ul>
      </div>
    </section>
  )
}

/* ---------- model view ---------- */

type Point = [number, number]

// Extreme points of each edge of the scroll (bottom, left, top, right, bottom, ...),
// joined by quarter ellipses.
const EDGE_OUTER: Point[] = [[730, 749], [520, 532], [698, 348], [852, 492], [741, 613], [649, 523], [705, 467], [757, 521], [712, 570]]
const EDGE_RIM: Point[] = [[740, 729], [540, 536], [697, 364], [839, 492], [738, 604], [656, 524], [706, 474], [750, 521], [710, 562]]
const EDGE_RIM2: Point[] = [[740, 725], [542, 536], [698, 366], [837, 492], [738, 602], [658, 524], [706, 475]]
const EDGE_FACE: Point[] = [[740, 699], [564, 535], [704, 383], [825, 496], [735, 593], [663, 523], [706, 479], [747, 521], [709, 561]]
const EDGE_GROOVE: Point[] = [[740, 688], [573, 535], [705, 391], [819, 497], [736, 589]]
const EDGE_INNER: Point[] = [[740, 679], [579, 535], [706, 394], [818, 494], [738, 588], [667, 522], [706, 480], [745, 520], [709, 559]]

function arcs(points: Point[], sweep: 0 | 1) {
  return points
    .slice(1)
    .map(([x, y], i) => `A${Math.abs(x - points[i][0])} ${Math.abs(y - points[i][1])} 0 0 ${sweep} ${x} ${y}`)
    .join('')
}

function edge(points: Point[]) {
  return `M${points[0].join(' ')}${arcs(points, 1)}`
}

// closed strip between two edges, from extreme number `from` up to `to`
function band(a: Point[], b: Point[], from: number, to?: number) {
  const back = b.slice(from, to).reverse()
  return `${edge(a.slice(from, to))}L${back[0].join(' ')}${arcs(back, 0)}Z`
}

function Model() {
  return (
    <svg viewBox="256 146 1022 802" preserveAspectRatio="xMidYMid meet" className="h-full w-full" role="img" aria-label="木雕饰品" fill="none">
      <defs>
        <clipPath id="above">
          <path d="M256 146h1022v500H721v81H256z" />
        </clipPath>
        <linearGradient id="rimFoot" gradientUnits="userSpaceOnUse" x1="0" y1="532" x2="0" y2="727">
          <stop offset="0" stopColor="#e4e4e3" />
          <stop offset="0.500" stopColor="#d0d0d0" />
          <stop offset="1" stopColor="#c8c7cf" />
        </linearGradient>
        <linearGradient id="rimFill" gradientUnits="userSpaceOnUse" x1="530" y1="540" x2="800" y2="560">
          <stop offset="0" stopColor="#e8e8e7" />
          <stop offset="0.200" stopColor="#f3f3f1" />
          <stop offset="0.450" stopColor="#e6e6e5" />
          <stop offset="0.700" stopColor="#d0d0cf" />
          <stop offset="0.900" stopColor="#bcbcc0" />
          <stop offset="1" stopColor="#aaa9b6" />
        </linearGradient>
        <linearGradient id="faceFill" gradientUnits="userSpaceOnUse" x1="0" y1="370" x2="0" y2="720">
          <stop offset="0" stopColor="#f3f2fa" />
          <stop offset="0.200" stopColor="#ffffff" />
          <stop offset="0.580" stopColor="#fdfdff" />
          <stop offset="1" stopColor="#e0dfe7" />
        </linearGradient>
        <linearGradient id="innerFill" gradientUnits="userSpaceOnUse" x1="565" y1="0" x2="830" y2="0">
          <stop offset="0" stopColor="#9695a3" />
          <stop offset="0.300" stopColor="#a5a5ab" />
          <stop offset="0.600" stopColor="#b8b8b9" />
          <stop offset="1" stopColor="#aaaaae" />
        </linearGradient>
        <linearGradient id="rimTurn" gradientUnits="userSpaceOnUse" x1="649" y1="0" x2="740" y2="0">
          <stop offset="0" stopColor="#e4e4e0" />
          <stop offset="0.200" stopColor="#cfcfce" />
          <stop offset="0.500" stopColor="#b2b1b9" />
          <stop offset="1" stopColor="#a9a8b6" />
        </linearGradient>
        <linearGradient id="faceTurn" gradientUnits="userSpaceOnUse" x1="656" y1="0" x2="738" y2="0">
          <stop offset="0" stopColor="#a9a8b6" />
          <stop offset="0.150" stopColor="#c2c2c6" />
          <stop offset="0.500" stopColor="#e0e0dd" />
          <stop offset="1" stopColor="#ffffff" />
        </linearGradient>
        <linearGradient id="coilFill" gradientUnits="userSpaceOnUse" x1="650" y1="490" x2="757" y2="550">
          <stop offset="0" stopColor="#e9e9e4" />
          <stop offset="0.450" stopColor="#c3c3c3" />
          <stop offset="0.650" stopColor="#a2a2a6" />
          <stop offset="1" stopColor="#9a99a5" />
        </linearGradient>
        <linearGradient id="coilInner" gradientUnits="userSpaceOnUse" x1="656" y1="0" x2="750" y2="0">
          <stop offset="0" stopColor="#a6a5b3" />
          <stop offset="0.650" stopColor="#a3a3a8" />
          <stop offset="1" stopColor="#e2e2e2" />
        </linearGradient>
        <radialGradient id="ball" cx="0.38" cy="0.4" r="0.65">
          <stop offset="0" stopColor="#f6f6f6" />
          <stop offset="0.550" stopColor="#dededf" />
          <stop offset="1" stopColor="#9d9da3" />
        </radialGradient>
        <radialGradient id="shine">
          <stop offset="0" stopColor="#fff" />
          <stop offset="1" stopColor="#e9e8f8" stopOpacity="0" />
        </radialGradient>
        <linearGradient id="cornerL">
          <stop offset="0" stopColor="#b9b9bb" />
          <stop offset="0.600" stopColor="#f0f0f0" />
        </linearGradient>
        <linearGradient id="cornerR">
          <stop offset="0" stopColor="#ecebf1" />
          <stop offset="1" stopColor="#66666e" />
        </linearGradient>
        <linearGradient id="shadow" x1="0" y1="0" x2="0" y2="1">
          <stop offset="0" stopColor="#c9c9c9" />
          <stop offset="1" stopColor="#d6d6d6" />
        </linearGradient>
      </defs>

      <g clipPath="url(#above)">
        <path d={band(EDGE_OUTER, EDGE_RIM, 1, 5)} fill="url(#rimFill)" />
        <path d={band(EDGE_OUTER, EDGE_RIM, 0, 2)} fill="url(#rimFoot)" />
        <path d={band(EDGE_RIM, EDGE_FACE, 0, 5)} fill="url(#faceFill)" />
        <path d={band(EDGE_FACE, EDGE_INNER, 0, 5)} fill="url(#innerFill)" />
        <path d={band(EDGE_OUTER, EDGE_RIM, 4, 6)} fill="url(#rimTurn)" />
        <path d={band(EDGE_RIM, EDGE_INNER, 4, 6)} fill="url(#faceTurn)" />
        <path d={band(EDGE_OUTER, EDGE_RIM, 5)} fill="url(#coilFill)" />
        <path d={band(EDGE_RIM, EDGE_INNER, 5)} fill="url(#coilInner)" />
        <path d="M667 522A43 39 0 0 0 709 559L712 570A60 48 0 0 1 668 535z" fill="#a5a4b1" />
        <path d="M752 545C745 557 735 562 726 568L712 570L710 562C722 561 731 557 739 544z" fill="#a5a4b0" />
        <path d="M750 545C741 555 733 560 722 563L720 559C731 557 738 550 740 543z" fill="#eeeef0" />
        <circle cx="707" cy="520" r="39" fill="url(#ball)" />
        <ellipse cx="722" cy="536" rx="13" ry="10" fill="url(#shine)" transform="rotate(-35 722 536)" />
        <g stroke="#000">
          <path d={edge(EDGE_OUTER)} strokeWidth="1.300" />
          <path d={edge(EDGE_RIM)} strokeWidth="0.900" />
          <path d={edge(EDGE_RIM2)} strokeWidth="0.900" />
          <path d={edge(EDGE_FACE.slice(0, 5))} strokeWidth="0.900" />
          <path d={edge(EDGE_GROOVE)} strokeWidth="0.900" />
          <path d={edge(EDGE_INNER)} strokeWidth="1.200" />
          <path d="M735 593C700 590 674 568 668 535M668 535A45 45 0 0 0 709 562" strokeWidth="0.900" />
          <path d="M720.500 470v13M739 544l13 1M721 563l5 5M712 570C690 571 674 555 668 535C672 560 700 587 738 588" strokeWidth="0.900" />
          <path d="M720.500 677v50" />
        </g>
      </g>

      <g stroke="#000">
        <path d="M488.500 727.500h393l17 17h-426z" fill="#d8d8d8" />
        <path d="M488.500 727.500l-17 16h8l15-16z" fill="#e8e8e6" />
        <path d="M875.500 727.500h7l16 16h-8z" fill="#9d9d9d" />
        <path d="M471.500 744.500h10v33h-8l-2-2z" fill="url(#cornerL)" />
        <path d="M888.500 744.500h11v33h-11z" fill="url(#cornerR)" />
        <path d="M481.500 744.500h407v33h-407z" fill="#eeedf1" />
        <path d="M899 744v33" strokeWidth="2" />
      </g>
      <rect x="472" y="801" width="427" height="54" rx="4" fill="url(#shadow)" />

      <g className="font-['Liberation_Sans',sans-serif] text-[15px]">
        <text x="315" y="828" fill="#f01818">
          X
        </text>
        <text x="256" y="887" fill="#18e018">
          Y
        </text>
      </g>
      <path d="M318.500 846h3v34h-3zM320 834l-4 14h8z" fill="#e01010" stroke="#6d0808" strokeWidth="0.800" />
      <path d="M286 880.500h32v3h-32zM272 882l15-4v8z" fill="#12c812" stroke="#076707" strokeWidth="0.800" />
      <path d="M315 878h9v9h-9z" fill="#1515b0" stroke="#55551c" strokeWidth="0.600" />
    </svg>
  )
}

function PromptBar() {
  return (
    <section className="mt-[5px] bg-white">
      <PaneHeader title="提示条">
        <button type="button" aria-label="增大字体" className="flex items-start font-['Liberation_Serif',serif] text-[16px] leading-4 font-bold text-[#30333c]">
          A
          <Svg size={4} box={4}>
            <path d="M0 4l2-3 2 3z" fill="#1d3f86" />
          </Svg>
        </button>
        <button type="button" aria-label="减小字体" className="flex items-start font-['Liberation_Serif',serif] text-[12px] leading-4 font-bold text-[#30333c]">
          A
          <Svg size={4} box={4}>
            <path d="M0 1h4L2 4z" fill="#1d3f86" />
          </Svg>
        </button>
        <button type="button" aria-label="折叠">
          <Svg size={10} box={10}>
            <path d="M2 5l3-3 3 3M2 9l3-3 3 3" stroke="#111" strokeWidth="1.500" />
          </Svg>
        </button>
        <PaneButton kind="menu" label="菜单" />
        <PaneButton kind="pin" label="固定" />
      </PaneHeader>
      <div className="h-7" />
    </section>
  )
}

const VIEW_TOOLS: { icon: IconName; label: string }[] = [
  { icon: 'zoomArea', label: '区域缩放' },
  { icon: 'zoomIn', label: '缩放' },
  { icon: 'fit', label: '适合' },
  { icon: 'pan', label: '平移' },
  { icon: 'rotate', label: '旋转视图' },
  { icon: 'viewCube', label: '视图方向' },
  { icon: 'shaded', label: '着色' },
  { icon: 'wire', label: '线框' },
]

function ZoomButton({ plus }: { plus?: boolean }) {
  return (
    <button type="button" aria-label={plus ? '放大' : '缩小'}>
      <Svg>
        <circle cx="8" cy="8" r="7" fill="#e9f0f8" stroke="#55739c" strokeWidth="1.200" />
        <path d={plus ? 'M4 8h8M8 4v8' : 'M4 8h8'} stroke="#3d536f" strokeWidth="2" />
      </Svg>
    </button>
  )
}

function StatusBar() {
  const [zoom, setZoom] = useState(28)
  return (
    <footer className="flex h-[23px] shrink-0 items-center border-t border-b-2 border-t-[#8b8e96] border-b-black bg-linear-to-b from-[#e1e4e9] via-[#abafb9] to-[#cdced4]">
      <div className="flex-1" />
      <div className="h-full w-[183px] border-l border-[#8f939c]" />
      <div className="h-full w-[26px] border-l border-[#8f939c]" />
      <div className="flex h-full items-end border-l border-[#8f939c] pl-[3px]">
        <input
          aria-label="命令查找器"
          defaultValue="命令查找器"
          className="h-[18px] w-[126px] border border-[#777b84] bg-white pl-[2px] text-[12px] text-black outline-none"
        />
      </div>
      <button type="button" aria-label="执行" className="mr-1 ml-[6px]">
        <Svg size={14}>{icons.redoGreen}</Svg>
      </button>
      <div className="flex h-full items-center gap-[7px] border-l border-[#8f939c] pl-3">
        {VIEW_TOOLS.map((t) => (
          <button key={t.label} type="button" aria-label={t.label}>
            <Icon name={t.icon} />
          </button>
        ))}
      </div>
      <div className="ml-[7px] flex items-center pr-1">
        <ZoomButton />
        <input
          type="range"
          aria-label="缩放比例"
          value={zoom}
          onChange={(e) => setZoom(Number(e.target.value))}
          className="h-4 w-[118px] appearance-none bg-transparent [&::-webkit-slider-runnable-track]:h-[2px] [&::-webkit-slider-runnable-track]:bg-[#7f8da3] [&::-webkit-slider-thumb]:-mt-[5px] [&::-webkit-slider-thumb]:h-3 [&::-webkit-slider-thumb]:w-[9px] [&::-webkit-slider-thumb]:appearance-none [&::-webkit-slider-thumb]:rounded-b-[4px] [&::-webkit-slider-thumb]:border [&::-webkit-slider-thumb]:border-[#4c678e] [&::-webkit-slider-thumb]:bg-[#eef3f9]"
        />
        <ZoomButton plus />
      </div>
    </footer>
  )
}

export default function App() {
  return (
    <div className={clsx('flex h-screen flex-col overflow-hidden bg-[#a0a3ad]', FONT)}>
      <Defs />
      <Header />
      <main className="flex min-h-0 flex-1">
        <aside className="flex w-[249px] shrink-0 flex-col justify-between bg-linear-to-b from-[#bcc0d3] to-[#b0b4c8]">
          <SelectPane />
          <PathFinder />
        </aside>
        <div className="w-[6px] shrink-0 bg-linear-to-r from-[#d0d3dc] to-[#9296a2]" />
        <div className="flex min-w-0 flex-1 flex-col">
          <div className="mr-[2px] min-h-0 flex-1 border-t border-l border-[#55565c] bg-linear-to-b from-[#242424] to-[#fcfcfc]">
            <Model />
          </div>
          <PromptBar />
        </div>
      </main>
      <StatusBar />
    </div>
  )
}
